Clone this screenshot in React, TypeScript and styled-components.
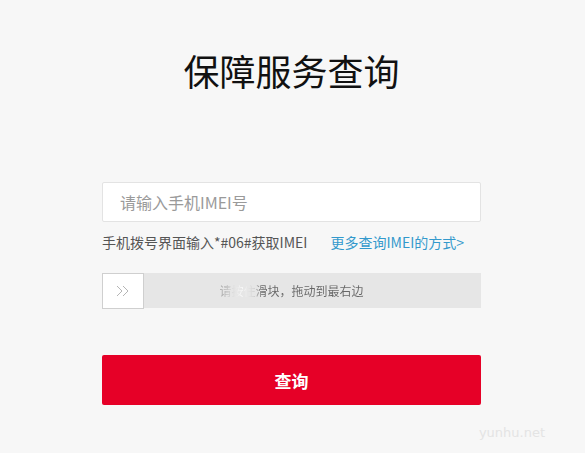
import styled, { createGlobalStyle } from "styled-components"

const GlobalStyle = createGlobalStyle`
    html, body {
        margin: 0;
        padding: 0;
        background: #f7f7f7;
        font-family: "Noto Sans CJK SC", "Liberation Sans", sans-serif;
    }
`

const Page = styled.main`
    position: relative;
    width: 585px;
    height: 453px;
    overflow: hidden;
`

const Form = styled.section`
    width: 379px;
    margin-left: 102px;
    padding-top: 50px;
    display: flex;
    flex-direction: column;
`

const Title = styled.h1`
    margin: 0 0 92px;
    font-size: 36px;
    line-height: 40px;
    font-weight: 400;
    color: #111;
    text-align: center;
`

const Input = styled.input`
    box-sizing: border-box;
    width: 100%;
    height: 40px;
    padding: 0 17px;
    border: 1px solid #e3e3e3;
    border-radius: 2px;
    background: #fff;
    font-family: inherit;
    font-size: 16px;
    color: #333;
    outline: none;

    &::placeholder {
        color: #9a9a9a;
    }
`

const Hint = styled.div`
    display: flex;
    gap: 23px;
    margin-top: 9px;
    font-size: 14px;
    line-height: 22px;
    color: #555;
`

const HintLink = styled.a`
    color: #3399cc;
    text-decoration: none;
`

const Slider = styled.div`
    position: relative;
    margin-top: 20px;
    height: 35px;
    background: #e6e6e6;
    display: flex;
    align-items: center;
    justify-content: center;
`

const Handle = styled.div`
    position: absolute;
    left: 0;
    top: 0;
    box-sizing: border-box;
    width: 42px;
    height: 36px;
    background: #fff;
    border: 1px solid #cfcfcf;
    display: flex;
    align-items: center;
    justify-content: center;
`

const SliderText = styled.span`
    font-size: 12px;
    background: linear-gradient(90deg, #9a9a9a 0%, #d8d8d8 9%, #fbfbfb 16%, #d0d0d0 24%, #666 30%, #666 100%);
    -webkit-background-clip: text;
    background-clip: text;
    color: transparent;
`

const SubmitButton = styled.button`
    margin-top: 47px;
    height: 50px;
    border: none;
    border-radius: 2px;
    background: #e60027;
    color: #fff;
    font-family: inherit;
    font-size: 17px;
    font-weight: 700;
    cursor: pointer;
`

const Watermark = styled.span`
    position: absolute;
    right: 40px;
    bottom: 13px;
    font-family: "DejaVu Sans", sans-serif;
    font-size: 13px;
    color: #e4e4e4;
`

function Chevrons() {
    return (
        <svg width="14" height="12" viewBox="0 0 14 12" fill="none" stroke="#b5b5b5" strokeWidth="1">
            <path d="M1 1l5 5-5 5" />
            <path d="M7 1l5 5-5 5" />
        </svg>
    )
}

export default function App() {
    return (
        <Page>
            <GlobalStyle />
            <Form>
                <Title>保障服务查询</Title>
                <Input placeholder="请输入手机IMEI号" />
                <Hint>
                    <span>手机拨号界面输入*#06#获取IMEI</span>
                    <HintLink href="#">更多查询IMEI的方式&gt;</HintLink>
                </Hint>
                <Slider>
                    <Handle><Chevrons /></Handle>
                    <SliderText>请按住滑块，拖动到最右边</SliderText>
                </Slider>
                <SubmitButton>查询</SubmitButton>
            </Form>
            <Watermark>yunhu.net</Watermark>
        </Page>
    )
}
